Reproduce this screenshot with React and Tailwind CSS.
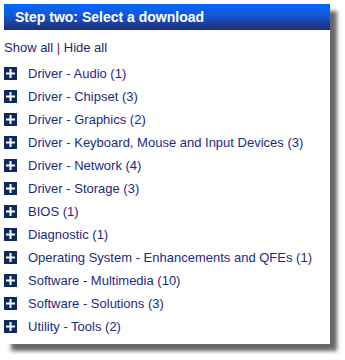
import React from "react";

/* ================= DATA ================= */

const categories = [
  "Driver - Audio (1)",
  "Driver - Chipset (3)",
  "Driver - Graphics (2)",
  "Driver - Keyboard, Mouse and Input Devices (3)",
  "Driver - Network (4)",
  "Driver - Storage (3)",
  "BIOS (1)",
  "Diagnostic (1)",
  "Operating System - Enhancements and QFEs (1)",
  "Software - Multimedia (10)",
  "Software - Solutions (3)",
  "Utility - Tools (2)"
];

/* ================= COMPONENT ================= */

export default function App() {
  return (
    <div className="w-[345px] h-[360px] bg-white pt-1 pl-1 font-['Liberation_Sans',Arial,sans-serif]">
      <div className="w-[326px] h-[340px] bg-white shadow-[7px_7px_4px_rgba(0,0,0,0.6)]">
        {/* Header */}
        <div className="h-[26px] flex items-center pl-[11px] bg-[linear-gradient(to_bottom,#0068ff,#1656d6_45%,#1f2f6c)]">
          <h2 className="text-[14px] font-bold text-white leading-none">
            Step two: Select a download
          </h2>
        </div>

        {/* Show / Hide */}
        <div className="pt-[10px] text-[13px] leading-[15px] text-[#1b2a6b]">
          <span>Show all</span>
          <span className="text-[#6a1b5e]"> | </span>
          <span>Hide all</span>
        </div>

        {/* Category list */}
        <ul className="mt-[7px]">
          {categories.map(c => (
            <li key={c} className="h-[23px] flex items-center">
              <PlusIcon />
              <span className="ml-[11px] text-[13px] text-[#1c2b80]">{c}</span>
            </li>
          ))}
        </ul>
      </div>
    </div>
  );
}

/* ================= ICON ================= */

const PlusIcon = () => (
  <svg width="13" height="13" viewBox="0 0 13 13" className="shrink-0">
    <rect width="13" height="13" fill="#0d2b5e" />
    <rect x="2" y="5.5" width="9" height="2" fill="#fff" />
    <rect x="5.5" y="2" width="2" height="9" fill="#fff" />
  </svg>
);
